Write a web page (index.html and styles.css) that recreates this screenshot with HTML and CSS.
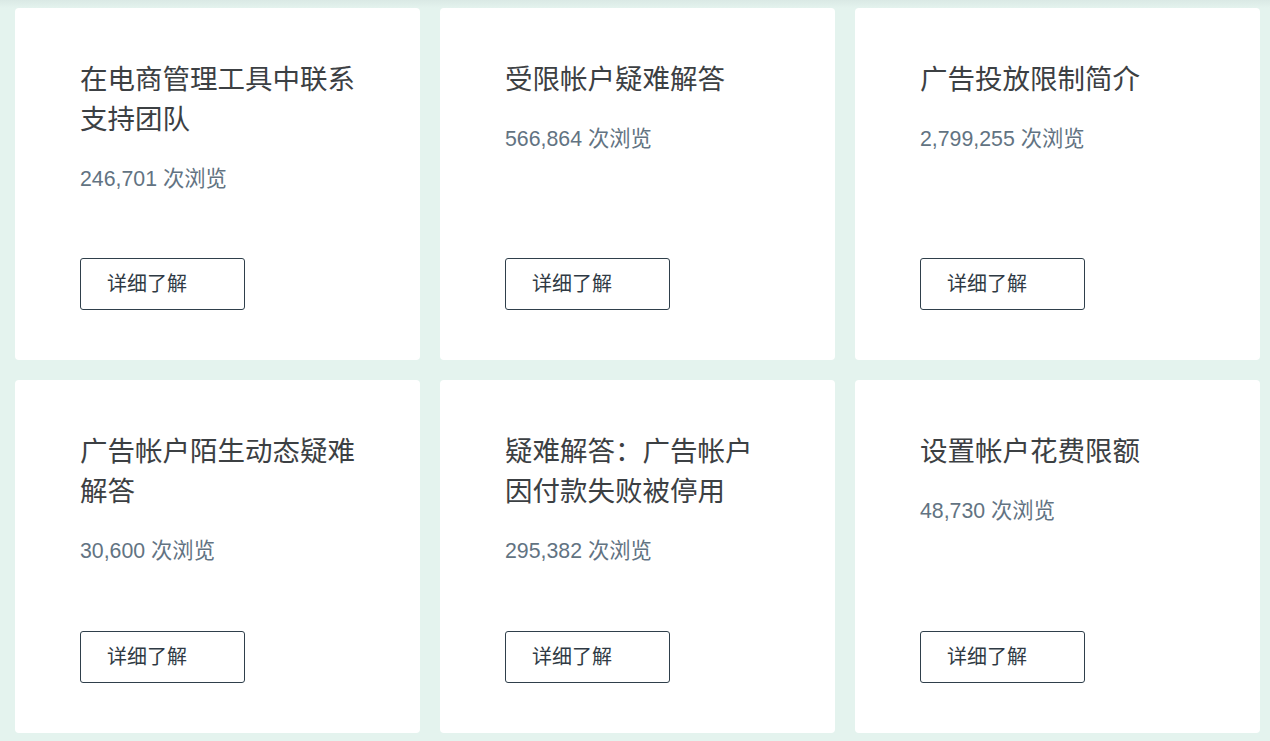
FILE: index.html
```html
<!DOCTYPE html>
<html lang="zh-CN">
<head>
    <meta charset="UTF-8">
    <meta name="viewport" content="width=device-width, initial-scale=1.0">
    <title>热门文章</title>
    <link rel="stylesheet" href="styles.css">
</head>
<body>
    <div class="top-shade"></div>

    <div class="cards">
        <div class="card">
            <h3 class="card-title">在电商管理工具中联系支持团队</h3>
            <div class="card-views">246,701 次浏览</div>
            <a class="card-btn" href="#">详细了解</a>
        </div>
        <div class="card">
            <h3 class="card-title">受限帐户疑难解答</h3>
            <div class="card-views">566,864 次浏览</div>
            <a class="card-btn" href="#">详细了解</a>
        </div>
        <div class="card">
            <h3 class="card-title">广告投放限制简介</h3>
            <div class="card-views">2,799,255 次浏览</div>
            <a class="card-btn" href="#">详细了解</a>
        </div>
        <div class="card">
            <h3 class="card-title">广告帐户陌生动态疑难解答</h3>
            <div class="card-views">30,600 次浏览</div>
            <a class="card-btn" href="#">详细了解</a>
        </div>
        <div class="card">
            <h3 class="card-title">疑难解答：广告帐户因付款失败被停用</h3>
            <div class="card-views">295,382 次浏览</div>
            <a class="card-btn" href="#">详细了解</a>
        </div>
        <div class="card">
            <h3 class="card-title">设置帐户花费限额</h3>
            <div class="card-views">48,730 次浏览</div>
            <a class="card-btn" href="#">详细了解</a>
        </div>
    </div>
</body>
</html>
```

FILE: styles.css
```css
body {
    margin: 0;
    background-color: #e4f3ee;
    font-family: "Liberation Sans", Arial, "Noto Sans CJK SC", sans-serif;
    overflow: hidden;
}

.top-shade {
    position: absolute;
    left: 0;
    right: 0;
    top: 0;
    height: 8px;
    background: linear-gradient(#dae9e5, #e4f3ee);
}

.cards {
    position: relative;
    display: grid;
    grid-template-columns: 405px 395px 405px;
    grid-template-rows: 352px 353px;
    column-gap: 20px;
    row-gap: 20px;
    padding: 8px 0 0 15px;
}

.card {
    background: white;
    border-radius: 4px;
    padding: 52px 64px 50px 65px;
    display: flex;
    flex-direction: column;
    align-items: flex-start;
}

.card-title {
    margin: 0;
    font-size: 27.5px;
    font-weight: normal;
    line-height: 40px;
    color: #3c4043;
}

.card-views {
    margin-top: 19px;
    font-size: 21.3px;
    line-height: 40px;
    color: #627382;
}

.card-btn {
    margin-top: auto;
    box-sizing: border-box;
    width: 165px;
    height: 52px;
    padding-left: 26px;
    border: 1px solid #2f3f4b;
    border-radius: 3px;
    font-size: 20px;
    line-height: 51px;
    color: #2f3a44;
    text-decoration: none;
}
```
